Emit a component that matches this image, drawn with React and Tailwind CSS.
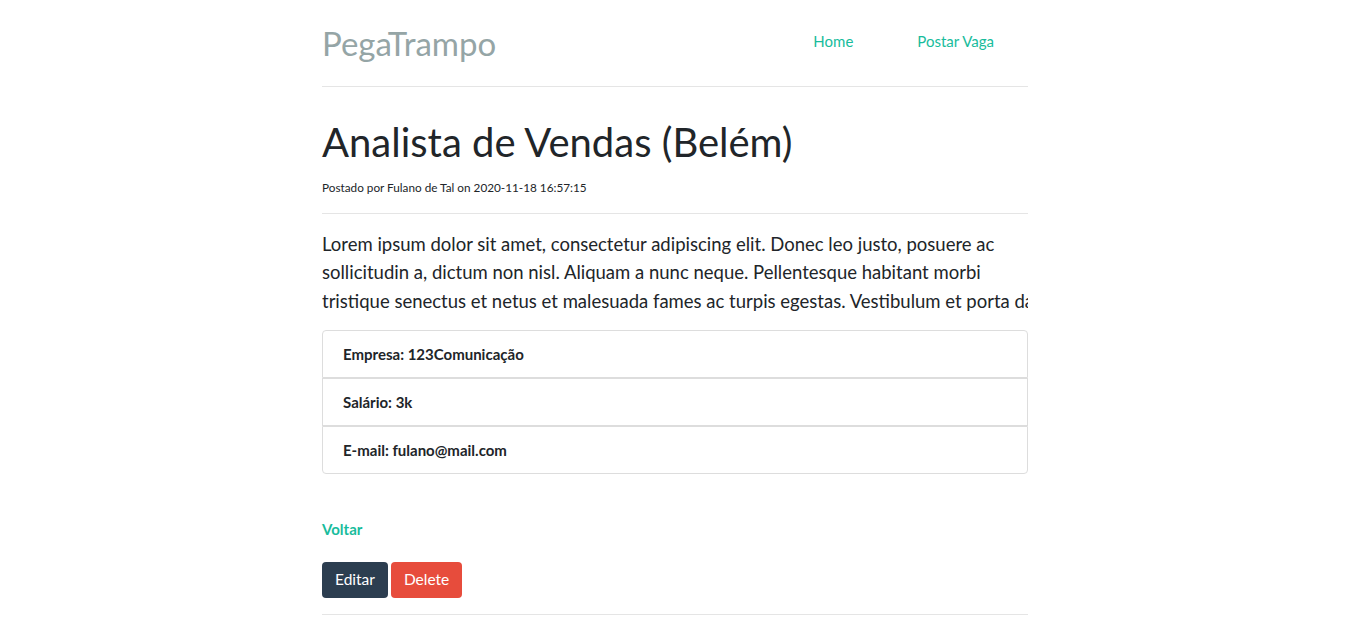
import React from 'react';

const details = [
    { label: 'Empresa', value: '123Comunicação' },
    { label: 'Salário', value: '3k' },
    { label: 'E-mail', value: 'fulano@mail.com' },
];

const lines = [
    'Lorem ipsum dolor sit amet, consectetur adipiscing elit. Donec leo justo, posuere ac',
    'sollicitudin a, dictum non nisl. Aliquam a nunc neque. Pellentesque habitant morbi',
    'tristique senectus et netus et malesuada fames ac turpis egestas. Vestibulum et porta dapibus',
];

export default function App() {
    return (
        <div className="min-h-screen bg-white font-['Lato','Open_Sans',sans-serif] text-[#212529]">
            <div className="w-[706px] ml-[322px]">
                {/* Header */}
                <header className="h-[87px] flex items-center justify-between border-b border-[#e5e5e5]">
                    <a className="text-[33px] leading-none text-[#95a5a6]">PegaTrampo</a>
                    <nav className="flex items-center -mt-[3px] mr-[2px]">
                        <a className="px-8 text-[15px] text-[#18bc9c]">Home</a>
                        <a className="px-8 text-[15px] text-[#18bc9c]">Postar Vaga</a>
                    </nav>
                </header>

                {/* Title */}
                <h1 className="mt-[31px] text-[40px] leading-[1.2] font-normal">Analista de Vendas (Belém)</h1>
                <p className="mt-[13px] text-[11.75px] leading-[1.5]">Postado por Fulano de Tal on 2020-11-18 16:57:15</p>
                <div className="mt-[16px] border-b border-[#e5e5e5]" />

                {/* Descrição */}
                <div className="mt-[16px] overflow-hidden text-[18.5px] leading-[28.5px]">
                    {lines.map((l, i) => (
                        <div key={i} className="whitespace-nowrap">{l}</div>
                    ))}
                </div>

                {/* Detalhes */}
                <ul className="mt-[15px]">
                    {details.map((d, i) => (
                        <li
                            key={d.label}
                            className={`h-[48px] flex items-center px-5 border border-[#dddddd] text-[15px] font-bold
                                ${i === 0 ? 'rounded-t' : ''} ${i === details.length - 1 ? 'rounded-b' : ''}`}
                        >
                            {d.label}: {d.value}
                        </li>
                    ))}
                </ul>

                <a className="block mt-[44px] text-[15px] leading-[22.5px] font-bold text-[#18bc9c]">Voltar</a>

                <div className="mt-[21px] flex gap-[3px]">
                    <button className="h-[36px] px-[13px] rounded text-[15.5px] text-white bg-[#2c3e50]">Editar</button>
                    <button className="h-[36px] px-[13px] rounded text-[15.5px] text-white bg-[#e74c3c]">Delete</button>
                </div>
                <div className="mt-[16px] border-b border-[#e5e5e5]" />
            </div>
        </div>
    );
}
